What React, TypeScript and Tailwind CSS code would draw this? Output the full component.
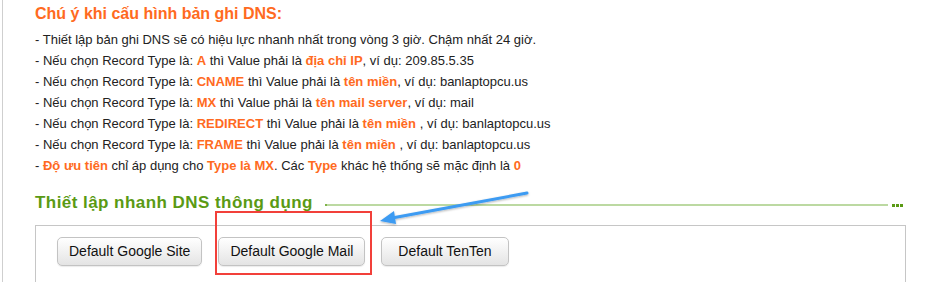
import React from 'react';

const O = ({ children }: { children: React.ReactNode }) => (
  <b className="text-[#ff6a21]">{children}</b>
);

const rules: React.ReactNode[] = [
  <>- Thiết lập bản ghi DNS sẽ có hiệu lực nhanh nhất trong vòng 3 giờ. Chậm nhất 24 giờ.</>,
  <>- Nếu chọn Record Type là: <O>A</O> thì Value phải là <O>địa chỉ IP</O>, ví dụ: 209.85.5.35</>,
  <>- Nếu chọn Record Type là: <O>CNAME</O> thì Value phải là <O>tên miền</O>, ví dụ: banlaptopcu.us</>,
  <>- Nếu chọn Record Type là: <O>MX</O> thì Value phải là <O>tên mail server</O>, ví dụ: mail</>,
  <>- Nếu chọn Record Type là: <O>REDIRECT</O> thì Value phải là <O>tên miền</O> , ví dụ: banlaptopcu.us</>,
  <>- Nếu chọn Record Type là: <O>FRAME</O> thì Value phải là <O>tên miền</O> , ví dụ: banlaptopcu.us</>,
  <>- <O>Độ ưu tiên</O> chỉ áp dụng cho <O>Type là MX</O>. Các <O>Type</O> khác hệ thống sẽ mặc định là <O>0</O></>,
];

const presets = [
  { label: 'Default Google Site', pad: 'px-[11px]' },
  { label: 'Default Google Mail', pad: 'px-[11px]' },
  { label: 'Default TenTen', pad: 'px-[16px]' },
];

export default function App() {
  return (
    <div className="relative w-[938px] h-[282px] overflow-hidden bg-white font-['Liberation_Sans',Arial,sans-serif]">
      <div className="ml-[2px] h-full border-l border-[#cfcfcf] pl-[32px]">
        {/* Notes */}
        <h2 className="pt-[4px] text-[16px] leading-[20px] font-bold text-[#ff6a21]">
          Chú ý khi cấu hình bản ghi DNS:
        </h2>
        <ul className="mt-[5px] text-[13px] leading-[21px] text-[#222]">
          {rules.map((r, i) => (
            <li key={i}>{r}</li>
          ))}
        </ul>

        {/* Quick setup */}
        <div className="mt-[17px] flex items-center w-[868px]">
          <h3 className="text-[17px] leading-[20px] font-bold tracking-[0.45px] text-[#5a9a14] whitespace-nowrap">
            Thiết lập nhanh DNS thông dụng
          </h3>
          <div className="ml-[12px] mt-[4px] flex flex-1 items-center">
            <div className="w-[2px] h-[2px] bg-[#7fb34a]" />
            <div className="flex-1 h-[2px] bg-[#bcd9a2]" />
            <div className="ml-[4px] flex gap-[1px]">
              <div className="w-[3px] h-[3px] bg-[#5a9a14]" />
              <div className="w-[3px] h-[3px] bg-[#5a9a14]" />
              <div className="w-[3px] h-[3px] bg-[#5a9a14]" />
            </div>
          </div>
        </div>

        <div className="mt-[12px] w-[871px] h-[60px] border border-[#c6c6c6] flex items-start gap-[16px] pl-[21px] pt-[11px]">
          {presets.map((p) => (
            <button
              key={p.label}
              className={`h-[29px] ${p.pad} rounded-[5px] border border-[#c3c3c3] bg-gradient-to-b from-white to-[#e4e4e4] text-[14px] text-[#111] shadow-[0_1px_1px_rgba(0,0,0,0.08)]`}
            >
              {p.label}
            </button>
          ))}
        </div>
      </div>

      {/* annotation: red box + arrow */}
      <div className="absolute left-[215px] top-[211px] w-[157px] h-[64px] border-2 border-[#f2403a]" />
      <svg className="absolute left-0 top-0" width="938" height="282">
        <defs>
          <filter id="sh" x="-10%" y="-50%" width="120%" height="200%">
            <feDropShadow dx="0" dy="1" stdDeviation="1" floodColor="#000" floodOpacity="0.3" />
          </filter>
        </defs>
        <g filter="url(#sh)">
          <line x1="527" y1="193" x2="392" y2="218" stroke="#3d9bf2" strokeWidth="3" strokeLinecap="round" />
          <polygon points="380,221 394,211 396,224" fill="#3d9bf2" />
        </g>
      </svg>
    </div>
  );
}
